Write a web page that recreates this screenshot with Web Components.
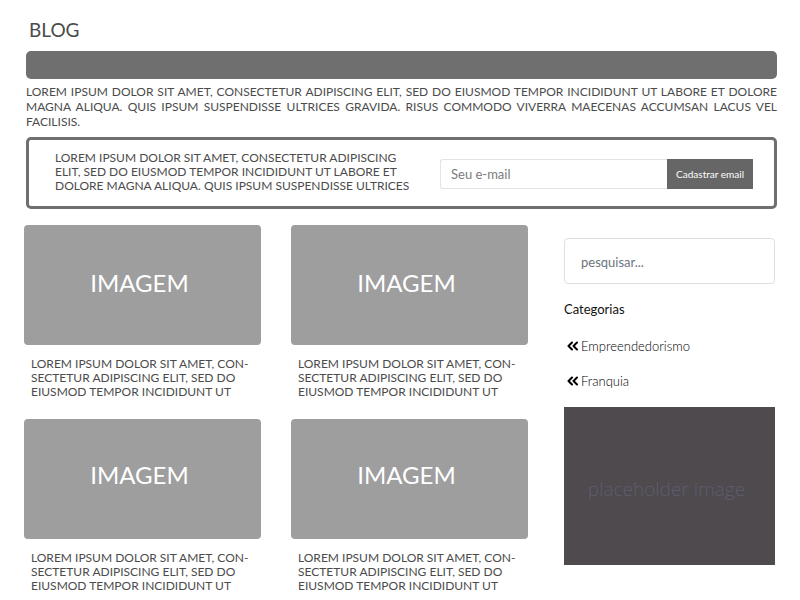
<!DOCTYPE html>
<html lang="pt-BR">
<head>
<meta charset="utf-8">
<meta name="viewport" content="width=device-width, initial-scale=1">
<title>Blog</title>
<style>
  body { margin: 0; background: #fff; color: #4b4b4b; font: 12px/14px Lato, "Liberation Sans", sans-serif; }
</style>
</head>
<body>
<blog-page>
  <blog-intro slot="intro">
    <span slot="title">BLOG</span>
    LOREM IPSUM DOLOR SIT AMET, CONSECTETUR ADIPISCING ELIT, SED DO EIUSMOD TEMPOR INCIDIDUNT UT LABORE ET DOLORE MAGNA ALIQUA. QUIS IPSUM SUSPENDISSE ULTRICES GRAVIDA. RISUS COMMODO VIVERRA MAECENAS ACCUMSAN LACUS VEL FACILISIS.
  </blog-intro>
  <newsletter-box slot="intro">LOREM IPSUM DOLOR SIT AMET, CONSECTETUR ADIPISCING<br>ELIT, SED DO EIUSMOD TEMPOR INCIDIDUNT UT LABORE ET<br>DOLORE MAGNA ALIQUA. QUIS IPSUM SUSPENDISSE ULTRICES</newsletter-box>
  <post-card><span slot="image">IMAGEM</span>LOREM IPSUM DOLOR SIT AMET, CON-<br>SECTETUR ADIPISCING ELIT, SED DO<br>EIUSMOD TEMPOR INCIDIDUNT UT</post-card>
  <post-card><span slot="image">IMAGEM</span>LOREM IPSUM DOLOR SIT AMET, CON-<br>SECTETUR ADIPISCING ELIT, SED DO<br>EIUSMOD TEMPOR INCIDIDUNT UT</post-card>
  <post-card class="low"><span slot="image">IMAGEM</span>LOREM IPSUM DOLOR SIT AMET, CON-<br>SECTETUR ADIPISCING ELIT, SED DO<br>EIUSMOD TEMPOR INCIDIDUNT UT</post-card>
  <post-card class="low"><span slot="image">IMAGEM</span>LOREM IPSUM DOLOR SIT AMET, CON-<br>SECTETUR ADIPISCING ELIT, SED DO<br>EIUSMOD TEMPOR INCIDIDUNT UT</post-card>
  <search-box slot="aside"></search-box>
  <category-list slot="aside">
    <span slot="title">Categorias</span>
    <category-link>Empreendedorismo</category-link>
    <category-link>Franquia</category-link>
  </category-list>
  <side-banner slot="aside">placeholder image</side-banner>
</blog-page>
<script>
const define = (name, html) => {
  const template = document.createElement('template');
  template.innerHTML = '<style>*{box-sizing:border-box}:host{display:block;box-sizing:border-box}</style>' + html;
  customElements.define(name, class extends HTMLElement {
    constructor() {
      super();
      this.attachShadow({ mode: 'open' }).append(template.content.cloneNode(true));
    }
  });
};

define('blog-page', `
<style>
  header { padding: 18px 23px 0 26px; }
  .content { display: grid; grid-template-columns: minmax(0, 504fr) minmax(0, 211fr); gap: 36px; padding: 16px 25px 7px 24px; }
  main { display: grid; grid-template-columns: 1fr 1fr; gap: 20px 30px; align-content: start; }
  aside { padding-top: 13px; }
</style>
<header><slot name="intro"></slot></header>
<div class="content"><main><slot></slot></main><aside><slot name="aside"></slot></aside></div>`);

define('blog-intro', `
<style>
  h1 { margin: 0; padding: 0 3px; font-size: 19px; line-height: 24px; font-weight: 400; }
  .bar { height: 28px; margin-top: 9px; border-radius: 5px; background: #6f6f6f; }
  p { margin: 5px 0 0; text-align: justify; line-height: 15px; }
</style>
<h1><slot name="title"></slot></h1>
<div class="bar"></div>
<p><slot></slot></p>`);

define('newsletter-box', `
<style>
  :host { margin-top: 8px; border: 3px solid #6f6f6f; border-radius: 5px; padding: 11px 21px 13px 26px; }
  .row { display: flex; align-items: flex-start; justify-content: space-between; gap: 24px; }
  p { margin: 0; }
  form { display: flex; flex: 0 1 313px; min-width: 0; margin-top: 8px; }
  input { flex: 1; min-width: 0; height: 30px; border: 1px solid #e3e3e3; border-right: 0; border-radius: 3px 0 0 3px; padding: 0 10px; font: 13px/16px Lato, sans-serif; color: #4b4b4b; background: #fff; }
  input::placeholder { color: #7b7b7b; opacity: 1; }
  button { border: 0; padding: 0 9px; height: 30px; background: #666; color: #fff; font: 10px/14px Lato, sans-serif; white-space: nowrap; }
</style>
<div class="row">
  <p><slot></slot></p>
  <form><input type="email" aria-label="Seu e-mail" placeholder="Seu e-mail"><button type="button">Cadastrar email</button></form>
</div>`);

define('post-card', `
<style>
  figure { margin: 0; height: 120px; padding: 0 6px 5px 0; display: flex; align-items: center; justify-content: center; border-radius: 4px; background: #9e9e9e; color: #fff; font-size: 24px; line-height: 28px; }
  :host(.low) figure { padding-bottom: 9px; }
  p { margin: 12px 0 0; padding: 0 0 0 7px; white-space: nowrap; }
</style>
<figure><slot name="image"></slot></figure>
<p><slot></slot></p>`);

define('search-box', `
<style>
  input { display: block; width: 100%; height: 46px; border: 1px solid #dfdfdf; border-radius: 4px; padding: 2px 16px 0; font: 13px/16px Lato, sans-serif; color: #4b4b4b; background: #fff; }
  input::placeholder { color: #6c757d; opacity: 1; }
</style>
<input type="search" aria-label="pesquisar" placeholder="pesquisar...">`);

define('category-list', `
<style>
  h2 { margin: 17px 0 19px; font-size: 13px; line-height: 16px; font-weight: 400; color: #111; }
  nav { display: grid; gap: 15px; }
</style>
<h2><slot name="title"></slot></h2>
<nav><slot></slot></nav>`);

define('category-link', `
<style>
  a { display: flex; align-items: center; gap: 3px; padding-left: 3px; color: #000; text-decoration: none; font-size: 13px; line-height: 20px; font-weight: 300; }
  svg { display: block; flex: none; }
</style>
<a href="#"><svg width="11" height="10" viewBox="0 0 11 10" fill="none" stroke="#000" stroke-width="2" stroke-linejoin="round" stroke-linecap="round" aria-hidden="true"><path d="M5 1.500 1.500 5 5 8.500M10 1.500 6.500 5 10 8.500"/></svg><slot></slot></a>`);

define('side-banner', `
<style>
  div { margin-top: 16px; height: 158px; padding: 6px 6px 0 0; display: flex; align-items: center; justify-content: center; background: #4e4a4e; color: #5f5c70; font: 300 19px/24px "Open Sans", "Noto Sans", sans-serif; white-space: nowrap; }
</style>
<div><slot></slot></div>`);
</script>
</body>
</html>
